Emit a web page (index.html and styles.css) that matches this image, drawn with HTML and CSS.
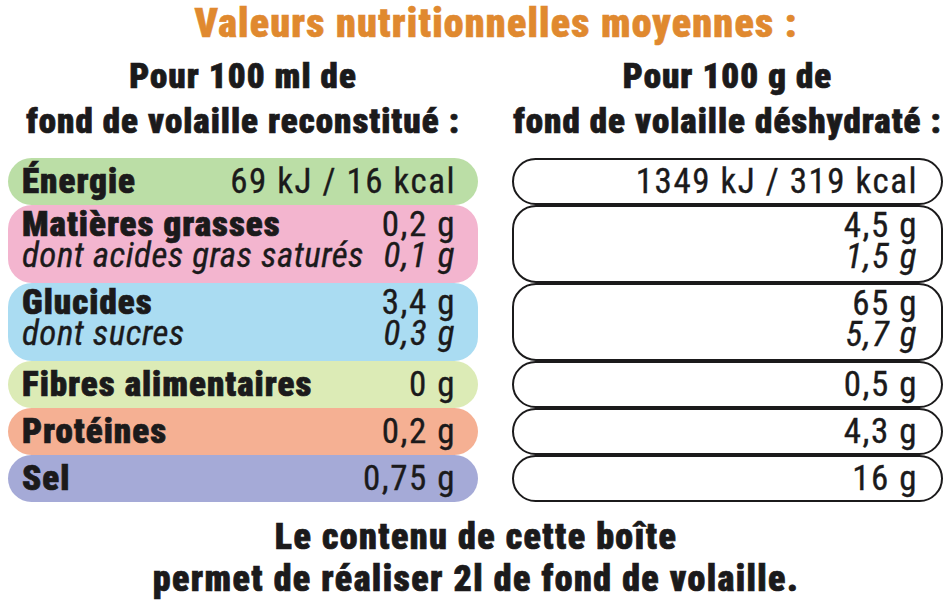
FILE: index.html
```html
<!DOCTYPE html>
<html lang="fr">
<head>
<meta charset="utf-8">
<title>Valeurs nutritionnelles moyennes</title>
<link rel="stylesheet" href="styles.css">
</head>
<body>
<div class="page">
  <h1 class="title">Valeurs nutritionnelles moyennes :</h1>
  <div class="columns">
    <div class="col col-left">
      <h2 class="head">Pour 100 ml de<br>fond de volaille reconstitué :</h2>
      <div class="table">
        <div class="row single c-green"><span class="lbl">Énergie</span><span class="val reg">69 kJ / 16 kcal</span></div>
        <div class="row double c-pink">
          <div class="line"><span class="lbl">Matières grasses</span><span class="val reg">0,2 g</span></div>
          <div class="line it"><span class="lbl">dont acides gras saturés</span><span class="val">0,1 g</span></div>
        </div>
        <div class="row double c-blue">
          <div class="line"><span class="lbl">Glucides</span><span class="val reg">3,4 g</span></div>
          <div class="line it"><span class="lbl">dont sucres</span><span class="val">0,3 g</span></div>
        </div>
        <div class="row single c-lime"><span class="lbl">Fibres alimentaires</span><span class="val reg">0 g</span></div>
        <div class="row single c-salmon"><span class="lbl">Protéines</span><span class="val reg">0,2 g</span></div>
        <div class="row single c-lavender"><span class="lbl">Sel</span><span class="val reg">0,75 g</span></div>
      </div>
    </div>
    <div class="col col-right">
      <h2 class="head">Pour 100 g de<br>fond de volaille déshydraté :</h2>
      <div class="table">
        <div class="row single outline"><span class="val reg">1349 kJ / 319 kcal</span></div>
        <div class="row double outline">
          <div class="line"><span class="val reg">4,5 g</span></div>
          <div class="line it"><span class="val">1,5 g</span></div>
        </div>
        <div class="row double outline">
          <div class="line"><span class="val reg">65 g</span></div>
          <div class="line it"><span class="val">5,7 g</span></div>
        </div>
        <div class="row single outline"><span class="val reg">0,5 g</span></div>
        <div class="row single outline"><span class="val reg">4,3 g</span></div>
        <div class="row single outline"><span class="val reg">16 g</span></div>
      </div>
    </div>
  </div>
  <p class="footer">Le contenu de cette boîte<br>permet de réaliser 2l de fond de volaille.</p>
</div>
</body>
</html>
```

FILE: styles.css
```css
* { box-sizing: border-box; }

html, body {
  margin: 0;
  padding: 0;
  background: #ffffff;
}

body {
  font-family: "Liberation Sans Narrow", "Roboto Condensed", "Liberation Sans", Arial, sans-serif;
  font-stretch: condensed;
  color: #1b1a1b;
  width: 952px;
  height: 608px;
  overflow: hidden;
}

.page {
  width: 952px;
}

.title {
  margin: 0;
  padding-left: 40px;
  text-align: center;
  font-size: 40px;
  line-height: 47px;
  font-weight: 900;
  letter-spacing: 1.2px;
  color: #e0892f;
  -webkit-text-stroke: 0.6px #e0892f;
}

.columns {
  display: grid;
  grid-template-columns: 470px 431px;
  column-gap: 34px;
  padding-left: 8px;
  margin-top: 7px;
}

.head {
  margin: 0 0 14px;
  text-align: center;
  font-size: 35px;
  line-height: 45px;
  font-weight: 900;
  letter-spacing: 1px;
  -webkit-text-stroke: 0.7px #1b1a1b;
}

.table {
  display: flex;
  flex-direction: column;
}

.row {
  font-size: 35px;
  border-radius: 24px;
}

.row.single {
  display: flex;
  justify-content: space-between;
  align-items: center;
  height: 47px;
  line-height: 40px;
}

.row.double {
  display: flex;
  flex-direction: column;
  height: 78px;
  padding-top: 4px;
}

.row.double .line {
  display: flex;
  justify-content: space-between;
  line-height: 31px;
}

.col-left .row {
  padding: 0 22px 0 14px;
}

.col-left .row.double {
  padding-top: 4px;
}

.lbl {
  font-weight: 900;
  letter-spacing: 1px;
  white-space: nowrap;
  -webkit-text-stroke: 0.7px #1b1a1b;
}

.val {
  white-space: nowrap;
  margin-left: auto;
  letter-spacing: 1.5px;
}

.reg {
  font-weight: 400;
  -webkit-text-stroke: 0.35px #1b1a1b;
}

.it .lbl,
.it .val {
  font-style: italic;
  font-weight: 400;
  letter-spacing: 0.5px;
  -webkit-text-stroke: 0.35px #1b1a1b;
}

.it .val { letter-spacing: 1.5px; }

.c-green { background: #bbdea6; }
.c-pink { background: #f3b5cf; }
.c-blue { background: #aadcf2; }
.c-lime { background: #dcebb6; }
.c-salmon { background: #f5b093; }
.c-lavender { background: #a5aad7; }

.outline {
  border: 2.5px solid #1b1a1b;
  padding: 0 23px 0 14px;
}

.col-right .row.double {
  padding-top: 3px;
}

.footer {
  margin: 14px 0 0;
  text-align: center;
  font-size: 36px;
  line-height: 42px;
  font-weight: 900;
  letter-spacing: 1.4px;
  -webkit-text-stroke: 0.7px #1b1a1b;
}
```
